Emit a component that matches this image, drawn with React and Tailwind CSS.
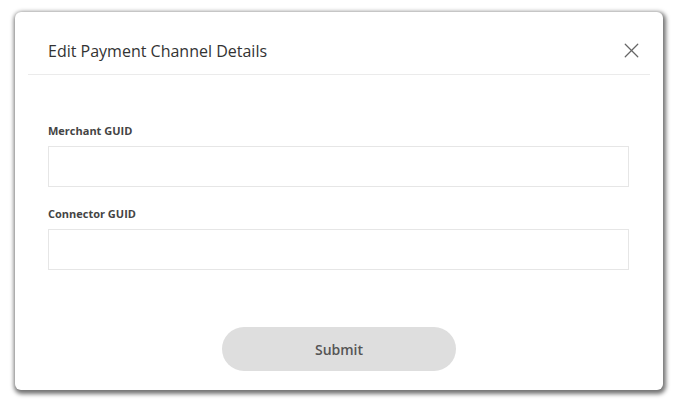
import React from "react";
import { X } from "lucide-react";

const font = { fontFamily: '"Open Sans", "Noto Sans", sans-serif' };

function Field({ label }) {
  return (
    <div className="flex flex-col">
      <label className="text-[11px] font-bold text-[#444] leading-[16px] mb-[7px]">
        {label}
      </label>
      <input
        type="text"
        className="h-[41px] w-full border border-[#e6e6e6] bg-white px-3 text-[13px] outline-none"
      />
    </div>
  );
}

export default function App() {
  return (
    <div className="w-[678px] h-[403px] bg-white pt-[12px] pl-[15px]" style={font}>
      <div className="w-[648px] h-[378px] bg-white rounded-[6px] shadow-[1px_2px_4px_2px_rgba(0,0,0,0.55)] flex flex-col">
        <div className="mx-[13px] h-[63px] border-b border-[#ebebeb] flex items-start justify-between pt-[27px] pl-[20px] pr-[6px]">
          <h2 className="text-[16px] leading-[24px] text-[#333] font-normal">
            Edit Payment Channel Details
          </h2>
          <button className="-mt-[1px] text-[#666]">
            <X size={25} strokeWidth={1.2} />
          </button>
        </div>
        <div className="pl-[33px] pr-[34px] pt-[48px] flex flex-col gap-[19px]">
          <Field label="Merchant GUID" />
          <Field label="Connector GUID" />
        </div>
        <div className="flex justify-center mt-[57px]">
          <button className="w-[234px] h-[44px] rounded-full bg-[#dedede] text-[14px] font-semibold text-[#555]">
            Submit
          </button>
        </div>
      </div>
    </div>
  );
}
